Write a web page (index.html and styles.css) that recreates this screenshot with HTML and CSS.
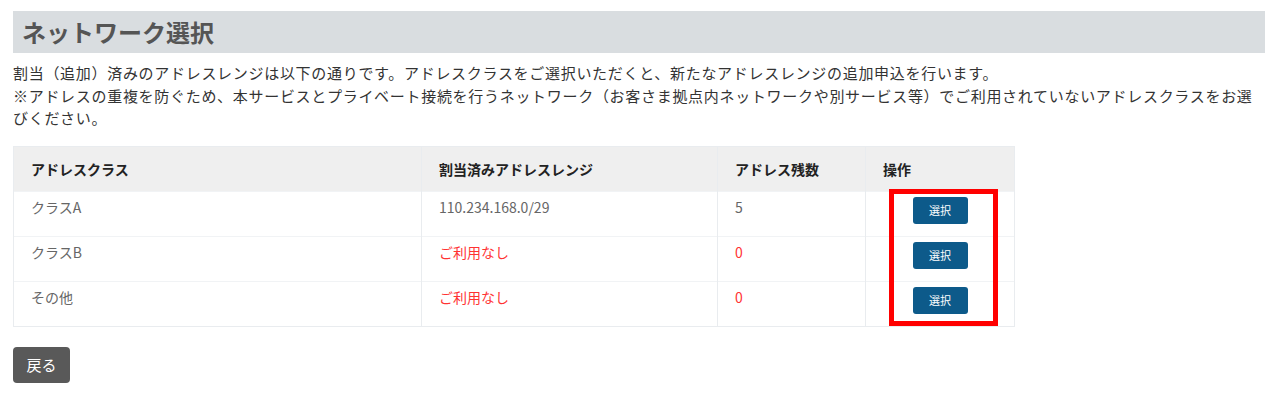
FILE: index.html
```html
<!DOCTYPE html>
<html lang="ja">

<head>
    <meta charset="utf-8" />
    <meta name="viewport" content="width=device-width" />
    <title>ネットワーク選択</title>
    <link rel="stylesheet" href="styles.css">
</head>
<body>
    <main class="container">
        <!-- Title start -->
        <h1 class="page-title">ネットワーク選択</h1>
        <!-- Title end -->
        <p class="lead">
            割当（追加）済みのアドレスレンジは以下の通りです。アドレスクラスをご選択いただくと、新たなアドレスレンジの追加申込を行います。<br>
            ※アドレスの重複を防ぐため、本サービスとプライベート接続を行うネットワーク（お客さま拠点内ネットワークや別サービス等）でご利用されていないアドレスクラスをお選びください。
        </p>
        <!-- Table start -->
        <div class="table-container">
            <table class="table">
                <thead>
                    <tr>
                        <th class="col-class">アドレスクラス</th>
                        <th class="col-range">割当済みアドレスレンジ</th>
                        <th class="col-count">アドレス残数</th>
                        <th class="col-action">操作</th>
                    </tr>
                </thead>
                <tbody>
                    <tr>
                        <td>クラスA</td>
                        <td>110.234.168.0/29</td>
                        <td>5</td>
                        <td class="action"><button class="select-button">選択</button></td>
                    </tr>
                    <tr>
                        <td>クラスB</td>
                        <td class="none">ご利用なし</td>
                        <td class="none">0</td>
                        <td class="action"><button class="select-button">選択</button></td>
                    </tr>
                    <tr>
                        <td>その他</td>
                        <td class="none">ご利用なし</td>
                        <td class="none">0</td>
                        <td class="action"><button class="select-button">選択</button></td>
                    </tr>
                </tbody>
            </table>
            <div class="highlight"></div>
        </div>
        <!-- Table end -->
        <button class="back-button">戻る</button>
    </main>
</body>

</html>
```

FILE: styles.css
```css
:root {
    --text-color: #333;
    --muted-color: #666;
    --border-color: #e9ecef;
    --font-family: "Noto Sans CJK JP", "Noto Sans", sans-serif;
}

* {
    box-sizing: border-box;
    margin: 0;
    padding: 0;
}

body {
    background-color: #fff;
    font-family: var(--font-family);
    color: var(--text-color);
}

button {
    cursor: pointer;
    font-family: var(--font-family);
    border: none;
}

.container {
    padding: 11px 12px 0 13px;
}

.page-title {
    background-color: #d9dde0;
    color: #555;
    font-size: 24px;
    font-weight: 700;
    line-height: 42px;
    height: 42px;
    padding-left: 9px;
    width: 1252px;
}

.lead {
    margin-top: 9px;
    font-size: 15px;
    letter-spacing: 0.7px;
    line-height: 22.5px;
    width: 1250px;
}

.table-container {
    position: relative;
    margin-top: 16px;
    width: 1001px;
}

.table {
    width: 1001px;
    border-collapse: collapse;
    table-layout: fixed;
    font-size: 14px;
    border: 1px solid var(--border-color);
}

.table th,
.table td {
    text-align: left;
    border-left: 1px solid var(--border-color);
    border-right: 1px solid var(--border-color);
}

.table th {
    background-color: #efefef;
    color: #222;
    font-weight: 700;
    height: 45px;
    padding: 0 17px;
    vertical-align: middle;
}

.table td {
    color: var(--muted-color);
    height: 45px;
    padding: 5px 17px 0 17px;
    line-height: 20px;
    vertical-align: top;
    border-top: 1px solid #f1f3f5;
}

.col-class { width: 408px; }
.col-range { width: 296px; }
.col-count { width: 148px; }
.col-action { width: 149px; }

.table td.none {
    color: #ff3333;
}

.table td.action {
    padding: 5px 0 0 0;
    text-align: center;
}

.select-button {
    background-color: #0d5a8a;
    color: #fff;
    width: 55px;
    height: 27px;
    border-radius: 3px;
    font-size: 11px;
    line-height: 27px;
    display: inline-block;
    vertical-align: top;
}

/* 注目枠 */
.highlight {
    position: absolute;
    left: 876px;
    top: 43px;
    width: 109px;
    height: 137px;
    border: 5px solid #ff0000;
}

.back-button {
    margin-top: 20px;
    background-color: #595959;
    color: #fff;
    width: 57px;
    height: 36px;
    border-radius: 4px;
    font-size: 15px;
}
```
